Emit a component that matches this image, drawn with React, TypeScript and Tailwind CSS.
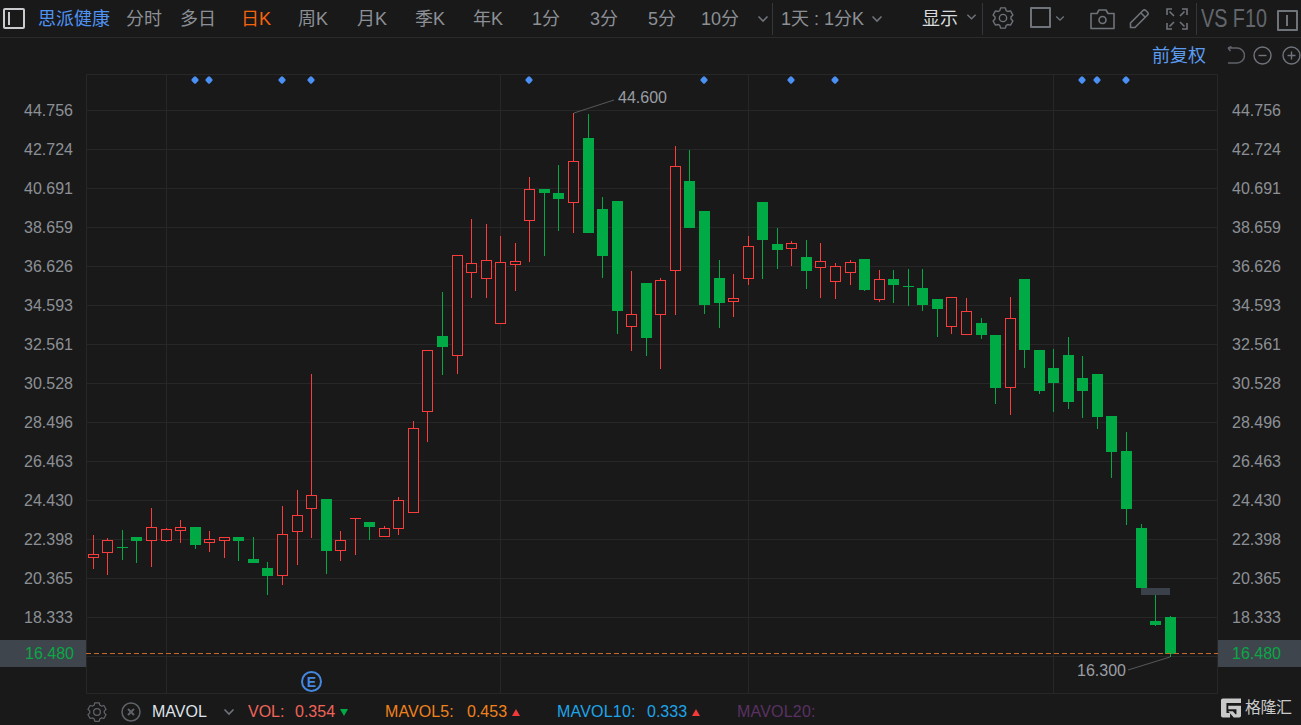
import React from "react";

type C = [number, number, number, number, number, 0 | 1];
// x, wickTop, wickBottom, bodyTop, bodyBottom, 1 = red hollow / 0 = green solid
const candles: C[] = [
  [93, 535, 569, 554, 558, 1],[107, 538, 575, 540, 553, 1],[122, 530, 560, 547, 548, 0],[136, 537, 563, 537, 541, 0],
  [151, 508, 567, 527, 541, 1],[166, 528, 542, 529, 541, 1],[180, 520, 543, 527, 531, 1],[195, 527, 549, 527, 545, 0],
  [209, 531, 552, 539, 543, 1],[224, 537, 558, 537, 541, 1],[238, 537, 561, 537, 541, 0],[253, 537, 563, 559, 563, 0],
  [267, 562, 595, 568, 576, 0],[282, 506, 585, 534, 576, 1],[297, 490, 565, 515, 532, 1],[311, 374, 538, 495, 509, 1],
  [326, 499, 574, 499, 551, 0],[340, 531, 561, 540, 551, 1],[355, 518, 555, 518, 519, 1],[369, 522, 540, 522, 527, 0],
  [384, 526, 537, 528, 537, 1],[398, 497, 535, 500, 529, 1],[413, 421, 513, 428, 513, 1],[427, 350, 442, 350, 412, 1],
  [442, 292, 375, 336, 347, 0],[457, 255, 374, 255, 356, 1],[471, 219, 298, 263, 273, 1],[486, 224, 298, 260, 279, 1],
  [500, 236, 324, 262, 324, 1],[515, 243, 291, 261, 265, 1],[529, 177, 262, 189, 221, 1],[544, 189, 256, 189, 193, 0],
  [558, 165, 231, 193, 199, 0],[573, 113, 233, 161, 203, 1],[588, 114, 233, 138, 233, 0],[602, 197, 278, 209, 256, 0],
  [617, 201, 334, 201, 311, 0],[631, 271, 351, 314, 327, 1],[646, 283, 356, 283, 338, 0],[660, 278, 369, 280, 315, 1],
  [675, 146, 315, 166, 271, 1],[689, 150, 228, 181, 228, 0],[704, 211, 314, 211, 305, 0],[719, 260, 328, 278, 303, 0],
  [733, 274, 317, 298, 302, 1],[748, 236, 285, 246, 279, 1],[762, 202, 279, 202, 240, 0],[777, 228, 269, 244, 250, 0],
  [791, 241, 266, 243, 249, 1],[806, 240, 289, 257, 271, 0],[820, 243, 298, 261, 268, 1],[835, 263, 299, 266, 282, 1],
  [850, 260, 285, 262, 273, 1],[864, 259, 291, 259, 290, 0],[879, 270, 302, 279, 300, 1],[893, 270, 303, 279, 285, 0],
  [908, 269, 306, 286, 287, 0],[922, 269, 311, 288, 305, 0],[937, 299, 337, 299, 309, 0],[951, 297, 334, 297, 327, 1],
  [966, 298, 335, 311, 335, 1],[981, 318, 339, 323, 335, 0],[995, 335, 404, 335, 388, 0],[1010, 297, 415, 318, 388, 1],
  [1024, 279, 368, 279, 350, 0],[1039, 350, 394, 350, 391, 0],[1053, 349, 412, 368, 383, 0],[1068, 337, 409, 355, 402, 0],
  [1082, 356, 418, 378, 391, 0],[1097, 374, 429, 374, 417, 0],[1111, 416, 478, 416, 452, 0],[1126, 432, 525, 451, 509, 0],
  [1141, 524, 588, 528, 588, 0],[1155, 595, 626, 621, 625, 0],[1170, 616, 657, 617, 654, 0],
];

const prices = ["44.756","42.724","40.691","38.659","36.626","34.593","32.561","30.528","28.496","26.463","24.430","22.398","20.365","18.333"];
const gridY = [110,149,188,227,266,305,344,383,422,461,500,539,578,617,656];
const gridX = [166,500,748,1053];
const markers = [195,209,282,311,529,704,791,835,1082,1097,1126];

const LEFT = 86, TOP = 74, WIDTH = 1132, HEIGHT = 620;
const RED = "#fb3c3c", GREEN = "#00aa45";

function Chevron({ className = "" }: { className?: string }) {
  return (
    <svg viewBox="0 0 12 8" className={className} fill="none" stroke="#6f747b" strokeWidth="1.6">
      <path d="M1.5 1.5 6 6l4.5-4.500" />
    </svg>
  );
}

function Gear({ size, color }: { size: number; color: string }) {
  return (
    <svg width={size} height={size} viewBox="0 0 24 24" fill="none" stroke={color} strokeWidth="1.5" strokeLinejoin="round">
      <path d="M9.4 1.8h5.2l.9 3 1.700 1 3-.7 2.600 4.500-2.100 2.300v2l2.100 2.300-2.600 4.500-3-.7-1.700 1-.9 3H9.400l-.9-3-1.700-1-3 .7-2.600-4.500 2.100-2.300v-2L1.200 9.600l2.600-4.500 3 .7 1.700-1z" transform="translate(0 -.9)" />
      <circle cx="12" cy="12" r="4" />
    </svg>
  );
}

function Tab({ children, className = "", active = false }: { children: React.ReactNode; className?: string; active?: boolean }) {
  return <span className={"whitespace-nowrap " + (active ? "text-[#f7630c] " : "text-[#8c9096] ") + className}>{children}</span>;
}

function Sep() {
  return <div className="w-px h-[32px] bg-[#33363a] shrink-0" />;
}

function Axis({ side }: { side: "left" | "right" }) {
  return (
    <div className="relative w-[86px] shrink-0 flex flex-col pt-[17px] text-[16px]">
      {prices.map((p) => (
        <div key={p} className={"h-[39px] leading-[39px] text-[#8c9096] " + (side === "left" ? "pl-[24px]" : "pl-[14px]")}>{p}</div>
      ))}
      <div className={"absolute top-[566px] h-[27px] leading-[27px] bg-[#3e454d] text-[#0aa745] " + (side === "left" ? "left-0 w-[86px] pl-[25px]" : "left-0 w-[83px] pl-[14px]")}>16.480</div>
    </div>
  );
}

export default function App() {
  return (
    <div className="w-[1301px] h-[725px] overflow-hidden bg-[#191919] flex flex-col font-['Liberation_Sans','Noto_Sans_CJK_SC',sans-serif]">
      {/* toolbar */}
      <div className="h-[38px] shrink-0 border-b border-[#2a2b2d] flex items-center pl-[3px] text-[18px] leading-none">
        <div className="w-[22px] h-[21px] border-2 border-[#c9cbce] rounded-[2px] flex items-center pl-[3px] mr-[13px] -mt-[1px]">
          <div className="w-[2px] h-[13px] bg-[#c9cbce]" />
        </div>
        <span className="text-[#4f94f5] whitespace-nowrap w-[88px]">思派健康</span>
        <Tab className="w-[54px]">分时</Tab>
        <Tab className="w-[61px]">多日</Tab>
        <Tab active className="w-[57px]">日K</Tab>
        <Tab className="w-[59px]">周K</Tab>
        <Tab className="w-[58px]">月K</Tab>
        <Tab className="w-[58px]">季K</Tab>
        <Tab className="w-[59px]">年K</Tab>
        <Tab className="w-[58px]">1分</Tab>
        <Tab className="w-[58px]">3分</Tab>
        <Tab className="w-[53px]">5分</Tab>
        <Tab className="w-[56px]">10分</Tab>
        <Chevron className="w-[12px] h-[8px] mr-[3px]" />
        <Sep />
        <Tab className="ml-[8px] w-[90px]">1天 : 1分K</Tab>
        <Chevron className="w-[12px] h-[8px] mr-[39px]" />
        <span className="text-[#d8dade] w-[44px] whitespace-nowrap">显示</span>
        <Chevron className="w-[11px] h-[8px] mr-[5px] -mt-[3px]" />
        <Sep />
        <div className="ml-[9px] mr-[16px] -mt-[2px]"><Gear size={22} color="#6f747b" /></div>
        <div className="w-[21px] h-[21px] border-2 border-[#6f747b] mr-[4px] -mt-[2px] rounded-[1px]" />
        <Chevron className="w-[10px] h-[7px] mr-[25px]" />
        <svg width="25" height="22" viewBox="0 0 25 22" fill="none" stroke="#6f747b" strokeWidth="1.6" className="mr-[14px]">
          <path d="M1 5.5h6l2-3.500h7l2 3.500h6v15H1z" strokeLinejoin="round" />
          <circle cx="12.5" cy="12" r="3.5" />
        </svg>
        <svg width="21" height="21" viewBox="0 0 21 21" fill="none" stroke="#6f747b" strokeWidth="1.6" strokeLinejoin="round" className="mr-[16px]">
          <path d="M1.5 15 14 2.500a2 2 0 0 1 2.800 0l1.700 1.700a2 2 0 0 1 0 2.800L6 19.500H1.500z" />
          <path d="M12 5l4 4" />
        </svg>
        <svg width="22" height="22" viewBox="0 0 22 22" fill="none" stroke="#6f747b" strokeWidth="1.6" className="mr-[8px]">
          <path d="M1 7V1h5M16 1h5v6M21 15v6h-5M6 21H1v-6" />
          <path d="M3.5 3.500 8 8M18.500 3.500 14 8M18.500 18.500 14 14M3.500 18.500 8 14" />
        </svg>
        <Sep />
        <span className="ml-[4px] w-[66px] text-[#63676d] text-[25px] whitespace-nowrap origin-left scale-x-[0.79] inline-block">VS F10</span>
        <div className="ml-[10px] w-[21px] h-[21px] border-2 border-[#6f747b] rounded-[1px] flex items-center justify-end pr-[8px] mt-[3px]">
          <div className="w-[2px] h-[11px] bg-[#6f747b]" />
        </div>
      </div>

      {/* adjust row */}
      <div className="h-[36px] shrink-0 flex items-center justify-end text-[18px] leading-none pb-[1px]">
        <span className="text-[#5b9bf0] mr-[20px]">前复权</span>
        <svg width="19" height="19" viewBox="0 0 19 19" fill="none" stroke="#5f6369" strokeWidth="1.5" className="mr-[8px]">
          <path d="M2 2h9a6.800 6.800 0 0 1 0 15H2M2 2l3.500-1.500M2 2l2.500 3" />
        </svg>
        <svg width="19" height="19" viewBox="0 0 19 19" fill="none" stroke="#6f747b" strokeWidth="1.4" className="mr-[10px]">
          <circle cx="9.5" cy="9.5" r="8.5" /><path d="M5.5 9.500h8" />
        </svg>
        <svg width="19" height="19" viewBox="0 0 19 19" fill="none" stroke="#6f747b" strokeWidth="1.4">
          <circle cx="9.5" cy="9.5" r="8.5" /><path d="M5.5 9.500h8M9.500 5.500v8" />
        </svg>
      </div>

      {/* chart row */}
      <div className="flex h-[620px] shrink-0">
        <Axis side="left" />
        <div className="relative w-[1132px] h-[620px]">
          <svg width={WIDTH} height={HEIGHT} viewBox={LEFT + " " + TOP + " " + WIDTH + " " + HEIGHT} className="block">
            <g shapeRendering="crispEdges" stroke="#272727" strokeWidth="1">
              {gridY.map((y) => <line key={y} x1={LEFT} x2={LEFT + WIDTH} y1={y + 0.5} y2={y + 0.5} />)}
              {gridX.map((x) => <line key={x} x1={x + 0.5} x2={x + 0.5} y1={TOP} y2={TOP + HEIGHT} />)}
              <rect x={LEFT + 0.5} y={TOP + 0.5} width={WIDTH - 1} height={HEIGHT - 1} fill="none" />
            </g>
            <path d="M574 113 614 100M1128 670 1170 657" stroke="#55585c" strokeWidth="1" fill="none" />
            <g shapeRendering="crispEdges">
              {candles.map(([x, wt, wb, bt, bb, red], i) => {
                const col = red ? RED : GREEN;
                return (
                  <g key={i}>
                    <line x1={x + 0.5} x2={x + 0.5} y1={wt} y2={wb} stroke={col} strokeWidth="1" />
                    {bb - bt <= 1 ? (
                      <line x1={x - 5} x2={x + 6} y1={bt + 0.5} y2={bt + 0.5} stroke={col} strokeWidth="1" />
                    ) : red ? (
                      <rect x={x - 4.5} y={bt + 0.5} width={10} height={bb - bt - 1} fill="#191919" stroke={col} strokeWidth="1" />
                    ) : (
                      <rect x={x - 5} y={bt} width={11} height={bb - bt} fill={col} />
                    )}
                  </g>
                );
              })}
              <rect x="1141" y="588" width="29" height="7" fill="#3a414b" />
              <line x1="1155.5" x2="1155.5" y1="595" y2="621" stroke={GREEN} />
            </g>
            <line x1={LEFT} x2={LEFT + WIDTH} y1="653.5" y2="653.5" stroke="#c4692a" strokeWidth="1" strokeDasharray="5 3" shapeRendering="crispEdges" />
            {markers.map((x) => (
              <rect key={x} x={x - 3} y="77" width="6" height="6" rx="1.5" fill="#4a90f5" transform={"rotate(45 " + x + " 80)"} />
            ))}
          </svg>
          <span className="absolute left-[532px] top-[15px] text-[16px] leading-[18px] text-[#9a9ea4]">44.600</span>
          <span className="absolute left-[991px] top-[588px] text-[16px] leading-[18px] text-[#9a9ea4]">16.300</span>
          <div className="absolute left-[215px] top-[597px] w-[21px] h-[21px] rounded-full border-2 border-[#4588e0] flex items-center justify-center text-[14px] leading-none font-bold text-[#4588e0]">E</div>
        </div>
        <Axis side="right" />
      </div>

      {/* bottom row */}
      <div className="flex-1 flex items-center pl-[87px] pt-[5px] text-[16px] leading-none whitespace-nowrap">
        <div className="mr-[14px]"><Gear size={20} color="#5f6369" /></div>
        <svg width="20" height="20" viewBox="0 0 20 20" fill="none" stroke="#5f6369" strokeWidth="1.5" className="mr-[11px]">
          <circle cx="10" cy="10" r="9" /><path d="M7 7l6 6M13 7l-6 6" strokeWidth="2" />
        </svg>
        <span className="text-[#dfe3ea] w-[71px]">MAVOL</span>
        <Chevron className="w-[12px] h-[8px] mr-[13px]" />
        <span className="text-[#f0645a] w-[47px]">VOL:</span>
        <span className="text-[#f0645a] w-[45px]">0.354</span>
        <span className="w-0 h-0 border-l-[4.5px] border-r-[4.5px] border-t-[7px] border-l-transparent border-r-transparent border-t-[#00aa45] mr-[37px]" />
        <span className="text-[#f0821e] w-[82px] tracking-[0.1px]">MAVOL5:</span>
        <span className="text-[#f0821e] w-[45px]">0.453</span>
        <span className="w-0 h-0 border-l-[4.5px] border-r-[4.5px] border-b-[7px] border-l-transparent border-r-transparent border-b-[#f23a3a] mr-[37px]" />
        <span className="text-[#1ea5ea] w-[90px] tracking-[0.2px]">MAVOL10:</span>
        <span className="text-[#1ea5ea] w-[45px]">0.333</span>
        <span className="w-0 h-0 border-l-[4.5px] border-r-[4.5px] border-b-[7px] border-l-transparent border-r-transparent border-b-[#f23a3a] mr-[37px]" />
        <span className="text-[#5a3163] w-[484px] tracking-[0.2px]">MAVOL20:</span>
        <div className="flex items-center -mt-[9px]">
          <svg width="20" height="20" viewBox="0 0 22 21" fill="#c9c9c9" className="mr-[4px]">
            <path d="M2 0h20v5H6v11h4v5H2a2 2 0 0 1-2-2V2a2 2 0 0 1 2-2z" />
            <path d="M8 8h14v11a2 2 0 0 1-2 2h-6l-6-7h5l3 3.500h1V12H8z" />
          </svg>
          <span className="text-[#c9c9c9] text-[16px] tracking-[-0.5px]">格隆汇</span>
        </div>
      </div>
    </div>
  );
}
